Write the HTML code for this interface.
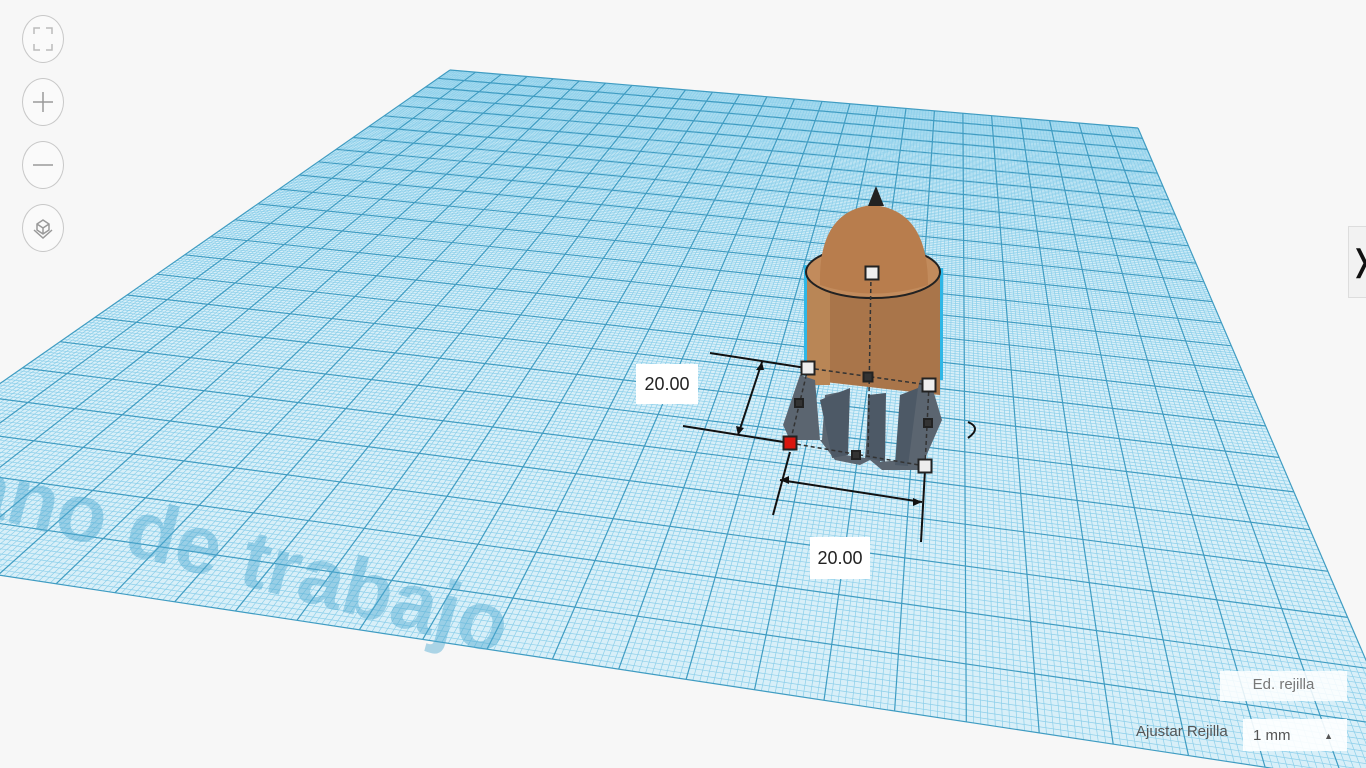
<!DOCTYPE html>
<html><head><meta charset="utf-8"><style>
html,body{margin:0;padding:0;width:1366px;height:768px;overflow:hidden;background:#f7f7f7;font-family:"Liberation Sans",sans-serif}
svg{position:absolute;left:0;top:0}
.btn{position:absolute;left:22px;width:40px;height:46px;border:1.5px solid #c8c8c8;border-radius:50%;background:#fafafa}
.lbl{position:absolute;background:#fff;font-size:18px;color:#222;text-align:center}
</style></head><body>
<svg id="s" width="1366" height="768" viewBox="0 0 1366 768"></svg>
<div class="btn" style="top:15px"><svg width="40" height="46"><path d="M11 18v-6h6M23 12h6v6M29 28v6h-6M17 34h-6v-6" fill="none" stroke="#bbb" stroke-width="1.5"/></svg></div>
<div class="btn" style="top:78px"><svg width="40" height="46"><path d="M20 13v20M10 23h20" stroke="#999" stroke-width="1.5"/></svg></div>
<div class="btn" style="top:141px"><svg width="40" height="46"><path d="M10 23h20" stroke="#999" stroke-width="1.5"/></svg></div>
<div class="btn" style="top:204px"><svg width="40" height="46"><path d="M14 19l6-4 6 4v6l-6 4-6-4z M14 19l6 4 6-4 M20 23v6 M11 25l9 8 9-8" fill="none" stroke="#999" stroke-width="1.5"/></svg></div>
<div style="position:absolute;left:1348px;top:226px;width:20px;height:70px;background:#f2f2f2;border:1px solid #ddd;font-size:30px;line-height:70px;color:#111;text-align:center">&#x276D;</div>
<div class="lbl" style="left:636px;top:364px;width:62px;height:40px;line-height:40px">20.00</div>
<div class="lbl" style="left:810px;top:537px;width:60px;height:42px;line-height:42px">20.00</div>
<div style="position:absolute;left:1220px;top:671px;width:127px;height:30px;background:rgba(255,255,255,.85);color:#777;font-size:15px;line-height:28px;text-align:center">Ed. rejilla</div>
<div style="position:absolute;left:1136px;top:723px;color:#555;font-size:15px">Ajustar Rejilla</div>
<div style="position:absolute;left:1243px;top:719px;width:104px;height:32px;background:rgba(255,255,255,.9);color:#555;font-size:15px;line-height:34px;padding-left:10px;box-sizing:border-box">1 mm<span style="position:absolute;right:14px;font-size:9px">&#9650;</span></div>
<script>
function H(src,dst){var A=[],b=[];for(var i=0;i<4;i++){var x=src[i][0],y=src[i][1],X=dst[i][0],Y=dst[i][1];A.push([x,y,1,0,0,0,-x*X,-y*X]);b.push(X);A.push([0,0,0,x,y,1,-x*Y,-y*Y]);b.push(Y);}
var n=8;for(var c=0;c<n;c++){var p=c;for(var r=c+1;r<n;r++)if(Math.abs(A[r][c])>Math.abs(A[p][c]))p=r;var t=A[c];A[c]=A[p];A[p]=t;t=b[c];b[c]=b[p];b[p]=t;for(var r=0;r<n;r++){if(r==c)continue;var f=A[r][c]/A[c][c];for(var k=c;k<n;k++)A[r][k]-=f*A[c][k];b[r]-=f*b[c];}}
var h=[];for(var i=0;i<n;i++)h.push(b[i]/A[i][i]);h.push(1);return h;}
var P=[[450,70],[1138,128],[1422,791],[-226,541]];
var h=H([[0,0],[1,0],[1,1],[0,1]],P);
function m(u,v){var w=h[6]*u+h[7]*v+1;return [(h[0]*u+h[1]*v+h[2])/w,(h[3]*u+h[4]*v+h[5])/w];}
var s='<polygon points="'+P.map(p=>p.join(',')).join(' ')+'" fill="#d8eff8"/>';
var N=250,minor='',major='';
for(var i=0;i<=N;i++){var u=i/N,maj=i%10==0;var a=m(u,0),b=m(u,1),c=m(0,u),d=m(1,u);
var l='<line x1="'+a[0].toFixed(1)+'" y1="'+a[1].toFixed(1)+'" x2="'+b[0].toFixed(1)+'" y2="'+b[1].toFixed(1)+'"/><line x1="'+c[0].toFixed(1)+'" y1="'+c[1].toFixed(1)+'" x2="'+d[0].toFixed(1)+'" y2="'+d[1].toFixed(1)+'"/>';
if(maj)major+=l;else minor+=l;}
s+='<g stroke="#8ccfea" stroke-width="0.7">'+minor+'</g><g stroke="#3f9cc2" stroke-width="1.2">'+major+'</g>';
s+='<text x="-120" y="520" transform="rotate(15 0 520)" font-family="Liberation Sans" font-weight="bold" font-size="82" fill="#4ea9d0" fill-opacity="0.45">Plano de trabajo</text>';
// object
s+='<path d="M806 265 L806 372 M941 268 L941 380" stroke="#2fb7e6" stroke-width="4"/>';
s+='<path d="M807 270 L807 380 L940 395 L940 270Z" fill="#a9754a"/>';
s+='<path d="M807 270 L807 385 L830 385 L830 275Z" fill="#b98656"/>';
s+='<ellipse cx="873" cy="272" rx="67" ry="26" fill="#c28b5c" stroke="#222" stroke-width="2"/>';
s+='<path d="M820 285 Q818 210 873 205 Q928 210 928 285 Q873 302 820 285Z" fill="#b87d4d"/>';
s+='<path d="M868 206 L876 186 L884 206Z" fill="#222"/>';
s+='<path d="M790 440 L783 425 L800 375 L815 380 L820 440 L835 460 L860 465 L870 460 L882 470 L920 470 L942 420 L930 380 L920 380 L900 460 L880 462 L885 395 L870 395 L865 458 L845 455 L850 390 L825 395 L822 440Z" fill="#5b6570"/>';
s+='<path d="M820 400 L850 388 L848 455 L832 458Z M868 395 L886 393 L885 462 L866 458Z M900 395 L918 388 L908 466 L895 465Z" fill="#4d5966"/>';
s+='<path d="M808 368 L929 385 M871 275 L868 455 M790 443 L925 466 M808 368 L790 443 M929 385 L925 466" stroke="#333" stroke-width="1.5" stroke-dasharray="4 3" fill="none"/>';
s+='<g stroke="#111" stroke-width="2" fill="none"><path d="M710 353 L806 368 M683 426 L790 443 M762 362 L738 435 M790 452 L773 515 M925 470 L921 542 M780 480 L922 502"/><path d="M968 422 q14 6 0 16"/></g>';
s+='<path d="M762 362l-6 8h8z M738 435l-2-9 8 2z M780 480l9-4v8z M922 502l-9 4v-8z" fill="#111"/>';
function sq(x,y,f,sz){return '<rect x="'+(x-sz/2)+'" y="'+(y-sz/2)+'" width="'+sz+'" height="'+sz+'" fill="'+f+'" stroke="#222" stroke-width="2"/>';}
s+=sq(872,273,'#eee',13)+sq(808,368,'#eee',13)+sq(929,385,'#eee',13)+sq(925,466,'#eee',13)+sq(790,443,'#d8160f',13);
s+=sq(868,377,'#333',9)+sq(799,403,'#333',8)+sq(928,423,'#333',8)+sq(856,455,'#333',8);
document.getElementById('s').innerHTML=s;
</script>
</body></html>
